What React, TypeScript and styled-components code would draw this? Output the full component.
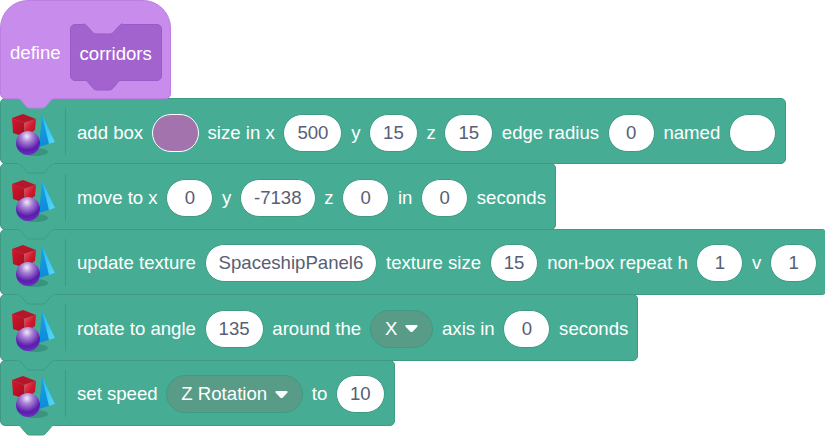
import React from 'react';
import styled, { createGlobalStyle } from 'styled-components';

// ----------------------------------------------------------------------

const TEAL = '#46ad94';
const TEAL_EDGE = '#3f9a84';
const HAT = '#c78cec';
const HAT_EDGE = '#bd80e2';
const CALL = '#a363cf';
const CALL_EDGE = '#9a5bc6';

const TAB_PATH = 'M0 0c2 0 3 1 4 2l4 4c1 1 2 2 4 2h12c2 0 3-1 4-2l4-4c1-1 2-2 4-2';

// ----------------------------------------------------------------------

const GlobalStyle = createGlobalStyle`
  html, body {
    margin: 0;
    background: #fff;
    overflow: hidden;
  }
`;

const Stack = styled.div`
  width: 825px;
  height: 436px;
  overflow: hidden;
  display: flex;
  flex-direction: column;
  align-items: flex-start;
  font-family: 'Liberation Sans', Arial, sans-serif;
  font-size: 18.6px;
  color: #fff;
`;

const Hat = styled.div`
  position: relative;
  z-index: 9;
  box-sizing: border-box;
  width: 171px;
  height: 99px;
  margin-bottom: -1px;
  padding: 23px 0 0 9px;
  display: flex;
  align-items: flex-start;
  gap: 9px;
  background: ${HAT};
  border: 1px solid ${HAT_EDGE};
  border-radius: 28px 28px 5px 5px;
`;

const HatLabel = styled.span`
  line-height: 58px;
`;

const CallShape = styled.div`
  position: relative;
  box-sizing: border-box;
  width: 92px;
  height: 57px;
  padding-top: 2px;
  display: flex;
  align-items: center;
  justify-content: center;
  background: ${CALL};
  border: 1px solid ${CALL_EDGE};
  border-radius: 5px;
`;

const Block = styled.div<{ $z: number }>`
  position: relative;
  z-index: ${(p) => p.$z};
  box-sizing: border-box;
  height: 66.4px;
  margin-bottom: -1px;
  padding: 3px 0 0 10px;
  display: flex;
  align-items: center;
  flex-shrink: 0;
  white-space: nowrap;
  background: ${TEAL};
  border: 1px solid ${TEAL_EDGE};
  border-radius: 5px;
`;

const IconCell = styled.div`
  width: 55px;
  height: 47px;
  margin: -2px 11px 0 0;
  flex-shrink: 0;
  box-sizing: border-box;
  border-right: 1px solid ${TEAL_EDGE};
  display: flex;
  align-items: flex-end;

  svg {
    margin-bottom: -2px;
  }
`;

const Fields = styled.div`
  display: flex;
  align-items: center;
  gap: 8.7px;
  padding-right: 9px;
`;

const Field = styled.span`
  box-sizing: border-box;
  min-width: 47px;
  height: 38px;
  padding: 0 13px;
  display: inline-flex;
  align-items: center;
  justify-content: center;
  color: #575e75;
  background: #fff;
  border: 1px solid ${TEAL_EDGE};
  border-radius: 19px;
`;

const Swatch = styled.span`
  box-sizing: border-box;
  width: 47px;
  height: 38px;
  background: #a273ad;
  border: 1px solid #fff;
  border-radius: 19px;
`;

const Dropdown = styled.span`
  box-sizing: border-box;
  height: 38px;
  padding: 0 14px;
  display: inline-flex;
  align-items: center;
  gap: 8px;
  background: #589c87;
  border: 1px solid ${TEAL_EDGE};
  border-radius: 19px;
`;

const Tab = styled.svg<{ $left: number; $bottom: number }>`
  position: absolute;
  left: ${(p) => p.$left}px;
  bottom: ${(p) => p.$bottom}px;
  width: 38px;
  height: 10px;
  overflow: visible;
`;

const TopNotch = styled.svg`
  position: absolute;
  left: 12px;
  top: -1px;
  width: 40px;
  height: 10px;
  overflow: visible;
`;

// ----------------------------------------------------------------------

const BlockTab: React.FC<{ fill: string; edge: string; left?: number; bottom?: number }> = ({
  fill,
  edge,
  left = 16,
  bottom = -10,
}) => (
  <Tab $left={left} $bottom={bottom} viewBox="0 0 36 8" preserveAspectRatio="none">
    <path d={TAB_PATH} fill={fill} />
    <path d={TAB_PATH} fill="none" stroke={edge} strokeWidth="1" vectorEffect="non-scaling-stroke" />
    <rect x="0.5" y="-1.6" width="35" height="2" fill={fill} />
  </Tab>
);

const ShapesIcon: React.FC = () => (
  <svg width="46" height="44" viewBox="0 0 46 44">
    <defs>
      <radialGradient id="ball" cx="0.45" cy="0.22" r="0.85">
        <stop offset="0" stopColor="#f2e8f8" />
        <stop offset="0.28" stopColor="#a982d6" />
        <stop offset="0.68" stopColor="#5a1cac" />
        <stop offset="1" stopColor="#7434c8" />
      </radialGradient>
      <linearGradient id="cubeLeft" x1="0" y1="0" x2="1" y2="1">
        <stop offset="0" stopColor="#d8152c" />
        <stop offset="1" stopColor="#a30c20" />
      </linearGradient>
      <linearGradient id="cubeRight" x1="0" y1="0" x2="1" y2="1">
        <stop offset="0" stopColor="#ee5a6a" />
        <stop offset="0.5" stopColor="#cf1a30" />
        <stop offset="1" stopColor="#b00f24" />
      </linearGradient>
      <linearGradient id="prismLeft" x1="0" y1="0" x2="0" y2="1">
        <stop offset="0" stopColor="#18a2e8" />
        <stop offset="1" stopColor="#0f8ad6" />
      </linearGradient>
      <linearGradient id="prismRight" x1="0" y1="0" x2="1" y2="1">
        <stop offset="0" stopColor="#28bdf0" />
        <stop offset="1" stopColor="#58d6f6" />
      </linearGradient>
    </defs>
    <path d="M1 5 12 1l13 5-12 4Z" fill="#b8142a" />
    <path d="M1 5 13 10l1 14L2 20Z" fill="url(#cubeLeft)" />
    <path d="M13 10 25 6l-1 11-10 7Z" fill="url(#cubeRight)" />
    <path d="M31 2 44 29 28 34Z" fill="url(#prismLeft)" />
    <path d="M31 2 44 29l-6 2Z" fill="url(#prismRight)" />
    <ellipse cx="24" cy="39" rx="13" ry="4" fill="#2e7f6c" opacity=".55" />
    <circle cx="17" cy="30" r="12" fill="url(#ball)" />
  </svg>
);

const Caret: React.FC = () => (
  <svg width="13" height="9" viewBox="0 0 13 9">
    <path d="M1.500 1h10c1 0 1.500 1 .8 1.700L7.800 7.400c-.7.700-1.900.7-2.600 0L.7 2.700C0 2 .5 1 1.500 1Z" fill="#fff" />
  </svg>
);

const Row: React.FC<{ z: number; children: React.ReactNode }> = ({ z, children }) => (
  <Block $z={z}>
    <IconCell>
      <ShapesIcon />
    </IconCell>
    <Fields>{children}</Fields>
    <BlockTab fill={TEAL} edge={TEAL_EDGE} />
  </Block>
);

// ----------------------------------------------------------------------

const App: React.FC = () => (
  <>
    <GlobalStyle />
    <Stack>
      <Hat>
        <HatLabel>define</HatLabel>
        <CallShape>
          corridors
          <TopNotch viewBox="0 0 36 8" preserveAspectRatio="none">
            <path d={TAB_PATH} fill={HAT} stroke={CALL_EDGE} strokeWidth="1" vectorEffect="non-scaling-stroke" />
          </TopNotch>
          <BlockTab fill={CALL} edge={CALL_EDGE} left={13} />
        </CallShape>
        <BlockTab fill={HAT} edge={HAT_EDGE} />
      </Hat>

      <Row z={8}>
        <span>add box</span>
        <Swatch />
        <span>size in x</span>
        <Field>500</Field>
        <span>y</span>
        <Field>15</Field>
        <span>z</span>
        <Field>15</Field>
        <span>edge radius</span>
        <Field>0</Field>
        <span>named</span>
        <Field />
      </Row>

      <Row z={7}>
        <span>move to x</span>
        <Field>0</Field>
        <span>y</span>
        <Field>-7138</Field>
        <span>z</span>
        <Field>0</Field>
        <span>in</span>
        <Field>0</Field>
        <span>seconds</span>
      </Row>

      <Row z={6}>
        <span>update texture</span>
        <Field>SpaceshipPanel6</Field>
        <span>texture size</span>
        <Field>15</Field>
        <span>non-box repeat h</span>
        <Field>1</Field>
        <span>v</span>
        <Field>1</Field>
      </Row>

      <Row z={5}>
        <span>rotate to angle</span>
        <Field>135</Field>
        <span>around the</span>
        <Dropdown>
          X
          <Caret />
        </Dropdown>
        <span>axis in</span>
        <Field>0</Field>
        <span>seconds</span>
      </Row>

      <Row z={4}>
        <span>set speed</span>
        <Dropdown>
          Z Rotation
          <Caret />
        </Dropdown>
        <span>to</span>
        <Field>10</Field>
      </Row>
    </Stack>
  </>
);

export default App;
